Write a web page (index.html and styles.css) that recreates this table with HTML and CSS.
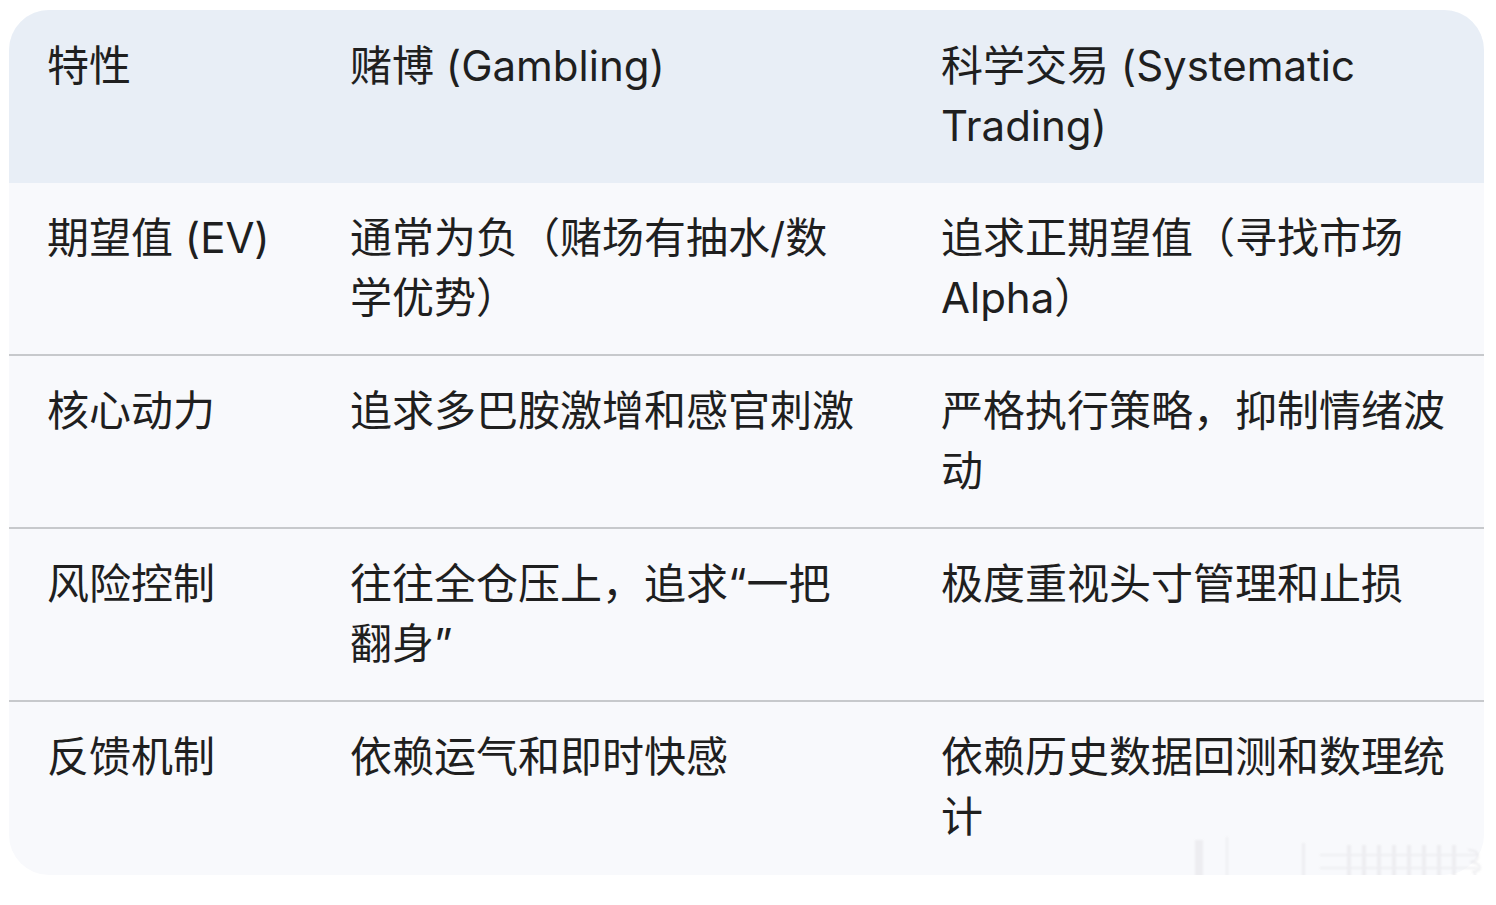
FILE: index.html
```html
<!DOCTYPE html>
<html lang="zh-CN">
<head>
<meta charset="utf-8">
<title>赌博 vs 科学交易</title>
<link rel="stylesheet" href="styles.css">
</head>
<body>
<div class="frame">
  <div class="card">
    <table class="cmp">
      <colgroup>
        <col class="w1"><col class="w2"><col class="w3">
      </colgroup>
      <thead>
        <tr>
          <th>特性</th>
          <th>赌博 (Gambling)</th>
          <th>科学交易 (Systematic Trading)</th>
        </tr>
      </thead>
      <tbody>
        <tr>
          <td>期望值 (EV)</td>
          <td>通常为负（赌场有抽水/数学优势）</td>
          <td>追求正期望值（寻找市场 Alpha）</td>
        </tr>
        <tr>
          <td>核心动力</td>
          <td>追求多巴胺激增和感官刺激</td>
          <td>严格执行策略，抑制情绪波动</td>
        </tr>
        <tr>
          <td>风险控制</td>
          <td>往往全仓压上，追求“一把翻身”</td>
          <td>极度重视头寸管理和止损</td>
        </tr>
        <tr>
          <td>反馈机制</td>
          <td>依赖运气和即时快感</td>
          <td>依赖历史数据回测和数理统计</td>
        </tr>
      </tbody>
    </table>
  </div>
  <svg class="wm" width="300" height="60" viewBox="0 0 300 60" aria-hidden="true">
    <g fill="#e6e6ea">
      <rect x="5" y="5" width="8" height="48"/>
      <rect x="36" y="2" width="2" height="51"/>
      <rect x="112" y="8" width="3" height="45"/>
      <rect x="130" y="19" width="158" height="2"/>
      <rect x="130" y="32" width="158" height="2"/>
      <rect x="157" y="10" width="4" height="43"/>
      <rect x="172" y="10" width="4" height="43"/>
      <rect x="187" y="10" width="4" height="43"/>
      <rect x="202" y="10" width="4" height="43"/>
      <rect x="217" y="10" width="4" height="43"/>
      <rect x="232" y="10" width="4" height="43"/>
      <rect x="247" y="10" width="4" height="43"/>
      <rect x="262" y="10" width="4" height="43"/>
      <rect x="284" y="36" width="2" height="17"/>
    </g>
    <path d="M278 15 q10 0 10 6 q0 5 -8 6 q10 1 10 6 q0 3 -8 4" fill="none" stroke="#e3e3e7" stroke-width="2"/>
  </svg>
</div>
</body>
</html>
```

FILE: styles.css
```css
html, body {
  margin: 0;
  padding: 0;
  background: #ffffff;
}

body {
  padding: 10px 12px 0 9px;
  font-family: Inter, "Noto Sans CJK SC", sans-serif;
  color: #1f1f1f;
}

.frame {
  position: relative;
  width: 1475px;
}

.card {
  width: 1475px;
  border-radius: 40px;
  overflow: hidden;
  background: #f8f9fc;
}

.cmp {
  width: 1475px;
  table-layout: fixed;
  border-collapse: collapse;
  border-spacing: 0;
  font-size: 42px;
  line-height: 60px;
}

.w1 { width: 303px; }
.w2 { width: 591px; }
.w3 { width: 581px; }

.cmp th,
.cmp td {
  text-align: left;
  vertical-align: top;
  font-weight: 400;
  padding: 25px 40px 26px 38px;
}

.cmp th {
  background: #e8eef6;
  padding-top: 26px;
  padding-bottom: 27px;
}

.cmp th:nth-child(2),
.cmp td:nth-child(2) {
  padding-right: 41px;
}

.cmp th:nth-child(3),
.cmp td:nth-child(3) {
  padding-right: 19px;
}

.cmp tbody tr + tr td {
  border-top: 2px solid #c7c9cc;
}

.cmp tbody tr:last-child td {
  padding-bottom: 28px;
}

.wm {
  position: absolute;
  left: 1181px;
  top: 825px;
  opacity: 0.6;
  filter: blur(0.8px);
}
```
